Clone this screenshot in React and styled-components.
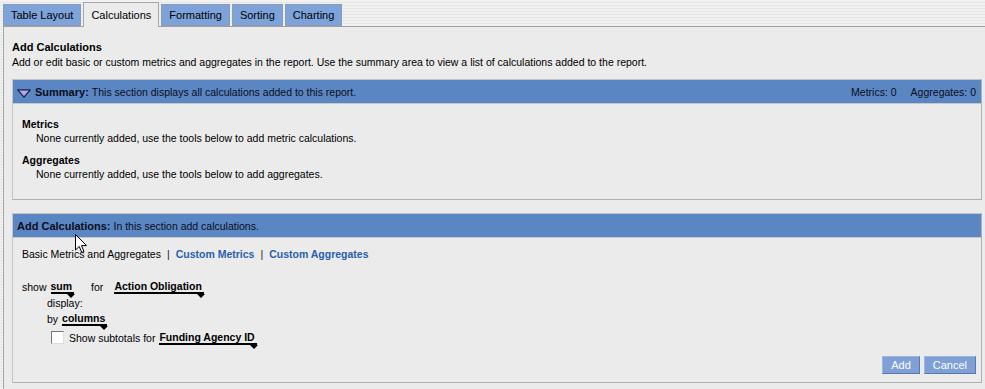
import React from 'react'
import styled, { createGlobalStyle } from 'styled-components'

const GlobalStyle = createGlobalStyle`
  html, body {
    margin: 0;
    padding: 0;
  }
  body {
    font-family: "Liberation Sans", Arial, sans-serif;
    font-size: 10.5px;
    color: #000;
  }
`

const tabs = ['Table Layout', 'Calculations', 'Formatting', 'Sorting', 'Charting']

export default () => {
  return <Page>
    <GlobalStyle />
    <TabBar>
      {tabs.map(t => <Tab key={t} active={t === 'Calculations'}>{t}</Tab>)}
    </TabBar>
    <Panel>
      <Heading>Add Calculations</Heading>
      <Intro>Add or edit basic or custom metrics and aggregates in the report. Use the summary area to view a list of calculations added to the report.</Intro>

      <Section top={10}>
        <SectionHeader>
          <Collapse width="14" height="9" viewBox="0 0 14 9">
            <path d="M0.8 0.8 L13.2 0.8 L7 8.2 Z" fill="#b6a9df" stroke="#1c1c4a" strokeWidth="1.2" strokeLinejoin="round" />
          </Collapse>
          <HeaderTitle>Summary:</HeaderTitle>
          <HeaderNote>This section displays all calculations added to this report.</HeaderNote>
          <Counts>
            <span>Metrics: 0</span>
            <span>Aggregates: 0</span>
          </Counts>
        </SectionHeader>
        <SummaryBody>
          <Group>
            <GroupTitle>Metrics</GroupTitle>
            <GroupText>None currently added, use the tools below to add metric calculations.</GroupText>
          </Group>
          <Group>
            <GroupTitle>Aggregates</GroupTitle>
            <GroupText>None currently added, use the tools below to add aggregates.</GroupText>
          </Group>
        </SummaryBody>
      </Section>

      <Section top={13}>
        <SectionHeader>
          <HeaderTitle>Add Calculations:</HeaderTitle>
          <HeaderNote>In this section add calculations.</HeaderNote>
        </SectionHeader>
        <CalcBody>
          <Links>
            <span>Basic Metrics and Aggregates</span>
            <Sep>|</Sep>
            <Link>Custom Metrics</Link>
            <Sep>|</Sep>
            <Link>Custom Aggregates</Link>
          </Links>
          <Form>
            <FormRow>
              <span>show</span>
              <Picker>sum</Picker>
              <Word gap={13}>for</Word>
              <Picker gap={7}>Action Obligation</Picker>
            </FormRow>
            <FormRow indent={25}>display:</FormRow>
            <FormRow indent={25}>
              <span>by</span>
              <Picker>columns</Picker>
            </FormRow>
            <FormRow indent={29}>
              <Check />
              <span>Show subtotals for</span>
              <Picker>Funding Agency ID</Picker>
            </FormRow>
          </Form>
          <Actions>
            <Button>Add</Button>
            <Button>Cancel</Button>
          </Actions>
        </CalcBody>
      </Section>
    </Panel>
    <Pointer width="13" height="20" viewBox="0 0 13 20">
      <path d="M0.5 0.5 L0.5 16 L4.2 12.4 L6.8 18.5 L9 17.6 L6.5 11.6 L11.5 11.6 Z" fill="#fff" stroke="#000" strokeWidth="1" />
    </Pointer>
  </Page>
}

const Page = styled.div`
  position: relative;
  height: 389px;
  overflow: hidden;
  padding: 3px 0 0 3px;
  box-sizing: border-box;
  background: repeating-linear-gradient(to bottom, #f1f1f1 0, #f1f1f1 2px, #e5e5e5 2px, #e5e5e5 3px);
`

const TabBar = styled.div`
  display: flex;
  align-items: flex-end;
  gap: 2px;
  height: 24px;
  position: relative;
  z-index: 1;
  margin-bottom: -1px;
`

const Tab = styled.div`
  display: flex;
  align-items: center;
  justify-content: center;
  box-sizing: border-box;
  height: ${p => p.active ? 25 : 22}px;
  padding: 0 7px;
  margin-bottom: ${p => p.active ? 0 : 1}px;
  background: ${p => p.active ? '#ebebeb' : '#7ea2da'};
  border: 1px solid ${p => p.active ? '#a8a8a8' : '#8c9cb6'};
  border-bottom: ${p => p.active ? 'none' : '1px solid #8c9cb6'};
  font-size: 11px;
  color: #000;
`

const Panel = styled.div`
  background: #ebebeb;
  border-top: 1px solid #a0a0a0;
  border-left: 1px solid #a8a8a8;
  padding: 13px 3px 10px 8px;
  min-height: 400px;
`

const Heading = styled.div`
  font-size: 11px;
  font-weight: bold;
  line-height: 14px;
`

const Intro = styled.div`
  margin-top: 1px;
  line-height: 14px;
`

const Section = styled.div`
  margin-top: ${p => p.top}px;
  border: 1px solid #c4c4c4;
  border-right-color: #b0b0b0;
  border-bottom-color: #b0b0b0;
`

const SectionHeader = styled.div`
  display: flex;
  align-items: center;
  box-sizing: border-box;
  height: 24px;
  padding: 0 5px 0 4px;
  background: #5a87c3;
  border-bottom: 1px solid #c8c8c8;
`

const Collapse = styled.svg`
  margin: 3px 4px 0 0;
`

const HeaderTitle = styled.span`
  font-size: 11px;
  font-weight: bold;
  color: #0c0c1a;
  margin-right: 3px;
`

const HeaderNote = styled.span`
  color: #0c0c1a;
`

const Counts = styled.span`
  margin-left: auto;
  display: flex;
  gap: 14px;
  color: #0c0c1a;
`

const SummaryBody = styled.div`
  padding: 13px 9px 18px;
  display: flex;
  flex-direction: column;
  gap: 8px;
`

const Group = styled.div`
  line-height: 14px;
`

const GroupTitle = styled.div`
  font-weight: bold;
`

const GroupText = styled.div`
  padding-left: 14px;
`

const CalcBody = styled.div`
  padding: 9px 5px 8px 9px;
`

const Links = styled.div`
  display: flex;
  gap: 6px;
  line-height: 14px;
`

const Sep = styled.span`
  color: #222;
`

const Link = styled.span`
  font-weight: bold;
  color: #2a5fab;
`

const Form = styled.div`
  margin-top: 18px;
  display: flex;
  flex-direction: column;
  gap: 1px;
`

const FormRow = styled.div`
  display: flex;
  align-items: center;
  gap: 4px;
  height: 15px;
  padding-left: ${p => p.indent || 0}px;
  &:last-child {
    margin-top: 3px;
  }
`

const Word = styled.span`
  margin-left: ${p => p.gap || 0}px;
`

const Picker = styled.span`
  position: relative;
  margin-left: ${p => p.gap || 0}px;
  font-weight: bold;
  line-height: 12px;
  padding-right: 2px;
  border-bottom: 2px solid #000;
  &::after {
    content: '';
    position: absolute;
    right: -1px;
    bottom: -6px;
    border-left: 4px solid transparent;
    border-right: 4px solid transparent;
    border-top: 4px solid #000;
  }
`

const Check = styled.span`
  width: 11px;
  height: 11px;
  border: 1px solid #777;
  border-right-color: #ddd;
  border-bottom-color: #ddd;
  background: #fff;
  margin-right: 1px;
`

const Actions = styled.div`
  display: flex;
  justify-content: flex-end;
  gap: 4px;
  margin-top: 11px;
`

const Button = styled.div`
  height: 18px;
  padding: 0 8px;
  display: flex;
  align-items: center;
  box-sizing: border-box;
  background: #7ea0d6;
  border: 1px solid #9db6e0;
  border-right-color: #5b78a8;
  border-bottom-color: #5b78a8;
  color: #fff;
  font-size: 11px;
`

const Pointer = styled.svg`
  position: absolute;
  left: 75px;
  top: 234px;
`
